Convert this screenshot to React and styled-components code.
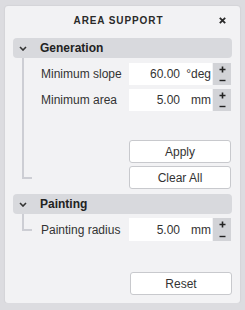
import React from "react";
import styled, { createGlobalStyle } from "styled-components";

const Global = createGlobalStyle`
  html, body { margin: 0; padding: 0; }
  body {
    background: #dcdce0;
    font-family: "Liberation Sans", Arial, sans-serif;
    color: #333;
  }
`;

const Panel = styled.div`
  margin: 6px 5px 0 5px;
  width: 235px;
  height: 297px;
  box-sizing: border-box;
  background: #f2f2f4;
  border-radius: 3px;
  box-shadow: 0 0 2px rgba(0, 0, 0, 0.12);
  padding: 0 8px 8px 8px;
  display: flex;
  flex-direction: column;
`;

const TitleBar = styled.div`
  height: 28px;
  display: flex;
  align-items: center;
  margin: 0 -8px 4px -8px;
  padding-right: 12px;
`;

const Title = styled.div`
  flex: 1;
  text-align: center;
  padding-left: 16px;
  font-size: 10px;
  font-weight: bold;
  letter-spacing: 0.9px;
  color: #2a2a2a;
`;

const Close = styled.button`
  width: 12px;
  height: 12px;
  padding: 0;
  border: none;
  background: none;
  display: flex;
  align-items: center;
  justify-content: center;
`;

const SectionHeader = styled.div`
  height: 20px;
  background: #d8d9dd;
  border-radius: 4px;
  display: flex;
  align-items: center;
  padding-left: 6px;
  font-size: 12px;
  font-weight: bold;
  color: #222;
`;

const Chevron = styled.span`
  width: 8px;
  display: flex;
  margin-right: 13px;
`;

const SectionBody = styled.div`
  position: relative;
  padding: ${(p) => p.$top}px 1px 0 28px;
  display: flex;
  flex-direction: column;
  gap: 4px;
  &::before {
    content: "";
    position: absolute;
    left: 9px;
    top: 0;
    bottom: 10px;
    width: 8px;
    border-left: 2px solid #cdced4;
    border-bottom: 2px solid #cdced4;
  }
`;

const Row = styled.div`
  display: flex;
  align-items: center;
  height: ${(p) => p.$h || 22}px;
`;

const Label = styled.div`
  flex: 1;
  font-size: 12px;
  color: #333;
`;

const Field = styled.div`
  width: 83px;
  height: 100%;
  background: #fff;
  display: flex;
  align-items: center;
  font-size: 12px;
  color: #333;
  padding-right: 1px;
  box-sizing: border-box;
`;

const Value = styled.span`
  flex: 1;
  text-align: right;
`;

const Unit = styled.span`
  width: 31px;
  text-align: right;
`;

const Stepper = styled.div`
  width: 18px;
  height: 100%;
  margin-left: 1px;
  background: #d2d3d7;
  display: flex;
  flex-direction: column;
  align-items: center;
  justify-content: space-around;
`;

const Actions = styled.div`
  display: flex;
  flex-direction: column;
  align-items: flex-end;
  gap: 3px;
  margin-top: ${(p) => p.$top}px;
`;

const Button = styled.button`
  width: 102px;
  height: 23px;
  background: #fff;
  border: 1px solid #c8c9cd;
  border-radius: 3px;
  font-family: "Liberation Sans", Arial, sans-serif;
  font-size: 12px;
  color: #333;
  padding: 0;
`;

const Spacer = styled.div`
  height: ${(p) => p.$h}px;
  flex: none;
`;

const ChevronIcon = () => (
  <svg width="8" height="5" viewBox="0 0 8 5">
    <path d="M1 1 L4 4 L7 1" fill="none" stroke="#333" strokeWidth="1.6" />
  </svg>
);

const StepIcons = () => (
  <>
    <svg width="7" height="7" viewBox="0 0 7 7">
      <path d="M3.5 0.5 V6.5 M0.5 3.5 H6.5" stroke="#222" strokeWidth="1.6" />
    </svg>
    <svg width="7" height="3" viewBox="0 0 7 3">
      <path d="M0.5 1.5 H6.5" stroke="#222" strokeWidth="1.4" />
    </svg>
  </>
);

const NumberRow = ({ label, value, unit, h }) => (
  <Row $h={h}>
    <Label>{label}</Label>
    <Field>
      <Value>{value}</Value>
      <Unit>{unit}</Unit>
    </Field>
    <Stepper>
      <StepIcons />
    </Stepper>
  </Row>
);

export default function App() {
  return (
    <>
      <Global />
      <Panel>
        <TitleBar>
          <Title>AREA SUPPORT</Title>
          <Close aria-label="close">
            <svg width="7" height="7" viewBox="0 0 7 7">
              <path d="M0.8 0.8 L6.2 6.2 M6.2 0.8 L0.8 6.2" stroke="#2a2a2a" strokeWidth="1.8" />
            </svg>
          </Close>
        </TitleBar>

        <SectionHeader>
          <Chevron><ChevronIcon /></Chevron>
          Generation
        </SectionHeader>
        <SectionBody $top={5}>
          <NumberRow label="Minimum slope" value="60.00" unit="°deg" />
          <NumberRow label="Minimum area" value="5.00" unit="mm" />
          <Actions $top={25}>
            <Button>Apply</Button>
            <Button>Clear All</Button>
          </Actions>
        </SectionBody>

        <Spacer $h={5} />
        <SectionHeader>
          <Chevron><ChevronIcon /></Chevron>
          Painting
        </SectionHeader>
        <SectionBody $top={4}>
          <NumberRow label="Painting radius" value="5.00" unit="mm" h={23} />
        </SectionBody>

        <Actions $top={31}>
          <Button>Reset</Button>
        </Actions>
      </Panel>
    </>
  );
}
